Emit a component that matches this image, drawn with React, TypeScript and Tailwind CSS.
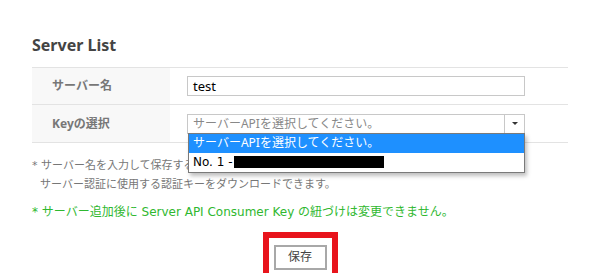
import React from "react";

const font = { fontFamily: '"Noto Sans", "Noto Sans CJK JP", sans-serif' };
const noteFont = { fontFamily: '"DejaVu Sans", "Noto Sans CJK JP", sans-serif' };

function Row(props: { label: string; children: React.ReactNode; last?: boolean }) {
  return (
    <div className={"flex h-[37px] " + (props.last ? "" : "border-b border-[#e3e3e3]")}>
      <div className="w-[138px] shrink-0 bg-[#f8f8f8] pl-[20px] flex items-center text-[12px] font-bold text-[#777]">
        {props.label}
      </div>
      <div className="flex-1 pl-[17px] flex items-center relative">{props.children}</div>
    </div>
  );
}

export default function App() {
  return (
    <div className="w-[595px] h-[273px] overflow-hidden bg-white" style={font}>
      <div className="ml-[32px] w-[536px] pt-[35px]">
        <h2 className="text-[16px] leading-[20px] font-bold text-[#444]">Server List</h2>

        <div className="mt-[12px] border-t border-b border-[#e3e3e3]">
          <Row label="サーバー名">
            <div className="w-[338px] h-[20px] border border-[#c8c8c8] flex items-center px-[5px] text-[13px] text-black leading-none">
              test
            </div>
          </Row>
          <Row label="Keyの選択" last>
            <div className="w-[338px] h-[20px] border border-[#c8c8c8] flex items-center relative">
              <span className="flex-1 px-[5px] text-[12px] text-[#888] leading-none">
                サーバーAPIを選択してください。
              </span>
              <span className="w-[20px] h-full border-l border-[#c8c8c8] flex items-center justify-center">
                <span className="w-0 h-0 border-l-[3px] border-r-[3px] border-t-[3px] border-l-transparent border-r-transparent border-t-[#333]" />
              </span>
              <div className="absolute left-[0px] top-[18px] w-[337px] bg-white border border-[#7a7a7a] shadow-[2px_3px_4px_rgba(0,0,0,0.25)] z-10">
                <div className="h-[19px] bg-[#1e90ff] text-white text-[12px] leading-none flex items-center px-[4px]">
                  サーバーAPIを選択してください。
                </div>
                <div className="h-[19px] text-black text-[12px] leading-none flex items-center px-[4px]">
                  <span style={noteFont}>No. 1 -</span>
                  <span className="ml-[1px] w-[150px] h-[12px] bg-black" />
                </div>
              </div>
            </div>
          </Row>
        </div>

        <div className="mt-[13px] text-[11px] leading-[19px] text-[#777]" style={noteFont}>
          <p>* サーバー名を入力して保存すると、</p>
          <p className="pl-[8px]">サーバー認証に使用する認証キーをダウンロードできます。</p>
          <p className="mt-[9px] text-[12px] text-[#2fb82f]">
            * サーバー追加後に Server API Consumer Key の紐づけは変更できません。
          </p>
        </div>

        <div className="mt-[10px] flex justify-center">
          <div className="border-[6px] border-[#e8141c] p-[5px]">
            <button className="w-[53px] h-[25px] border-2 border-[#a8a8a8] bg-white text-[12px] text-[#444] leading-none">
              保存
            </button>
          </div>
        </div>
      </div>
    </div>
  );
}
